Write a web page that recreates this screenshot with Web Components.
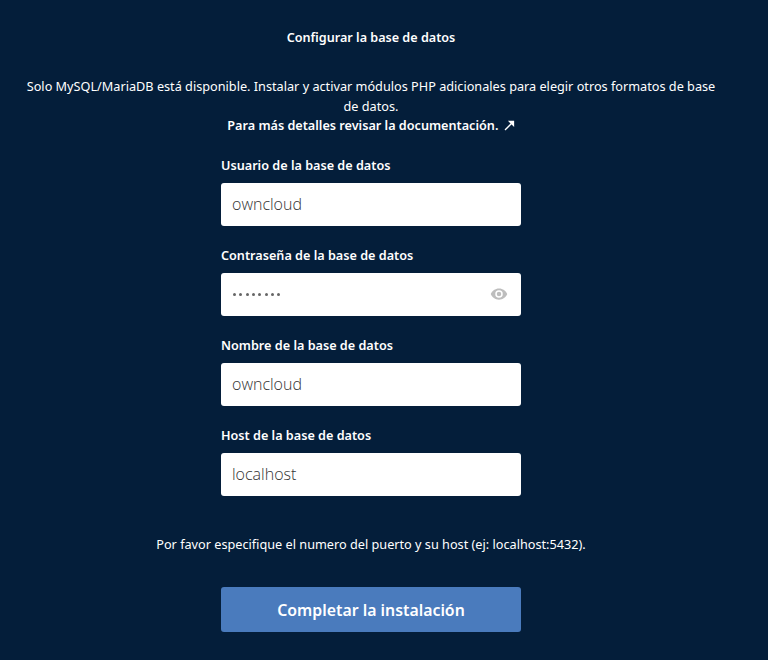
<!DOCTYPE html>
<html lang="es">
<head>
<meta charset="utf-8">
<title>Configurar la base de datos</title>
<style>
html,body{margin:0;padding:0;background:#041e3a;}
body{font-family:"Noto Sans","Open Sans",sans-serif;color:#fff;height:660px;overflow:hidden;}
</style>
</head>
<body>
<db-setup></db-setup>
<script>
class dbField extends HTMLElement{
    constructor(){
        super();
        this.attachShadow({mode:'open'});
        const secret=this.hasAttribute('secret');
        this.shadowRoot.innerHTML=`
        <style>
        :host{display:block;width:300px;height:90px;}
        label{display:block;height:27px;font-size:12.65px;line-height:18px;font-weight:600;color:#fff;}
        .box{display:flex;align-items:center;justify-content:space-between;box-sizing:border-box;height:43px;padding:0 11px;background:#fff;border-radius:3px;}
        .val{font-family:"Open Sans","Noto Sans",sans-serif;font-size:16px;color:#333;font-weight:300;}
        .dots{display:flex;gap:3.35px;margin-left:1px;}
        .dots i{display:block;width:3px;height:3px;border-radius:50%;background:#666;}
        svg{display:block;margin-right:2px;}
        </style>
        <label><slot name="label"></slot></label>
        <div class="box">
        ${secret
            ? `<div class="dots">${'<i></i>'.repeat(8)}</div>
               <svg width="18" height="18" viewBox="0 0 24 24" fill="#bdbdbd"><path d="M12 4.5C7 4.5 2.7 7.6 1 12c1.7 4.4 6 7.5 11 7.5s9.3-3.1 11-7.5c-1.7-4.4-6-7.5-11-7.5zM12 17a5 5 0 1 1 0-10 5 5 0 0 1 0 10zm0-8a3 3 0 1 0 0 6 3 3 0 0 0 0-6z"/></svg>`
            : `<span class="val"><slot></slot></span>`}
        </div>`;
    }
}
customElements.define('db-field',dbField);

class dbSetup extends HTMLElement{
    constructor(){
        super();
        this.attachShadow({mode:'open'});
        this.shadowRoot.innerHTML=`
        <style>
        :host{display:block;width:742px;height:660px;font-family:"Noto Sans","Open Sans",sans-serif;color:#fff;}
        .wrap{display:flex;flex-direction:column;align-items:center;padding-top:29px;}
        h2{margin:0;font-size:12.6px;line-height:18px;font-weight:600;}
        p{margin:0;text-align:center;font-size:12.7px;line-height:19.5px;}
        .info{width:700px;margin-top:30px;}
        .info b{font-weight:600;font-size:12.65px;}
        .arrow{display:inline-block;vertical-align:-1px;margin-left:2px;}
        .fields{margin-top:20px;display:flex;flex-direction:column;}
        .note{margin-top:19px;}
        button{margin-top:33px;width:300px;height:45px;border:0;border-radius:3px;background:#4a7bbd;color:#fff;font:600 15.85px "Noto Sans","Open Sans",sans-serif;padding:0;}
        </style>
        <div class="wrap">
            <h2>Configurar la base de datos</h2>
            <p class="info">Solo MySQL/MariaDB está disponible. Instalar y activar módulos PHP adicionales para elegir otros formatos de base de datos.<br>
            <b>Para más detalles revisar la documentación.</b>
            <svg class="arrow" width="11" height="11" viewBox="0 0 11 11" fill="#fff" stroke="#fff" stroke-width="1.3"><path d="M1 10 8 3"/><path d="M5.5 1.5h4v4z"/></svg></p>
            <div class="fields">
                <db-field><span slot="label">Usuario de la base de datos</span>owncloud</db-field>
                <db-field secret><span slot="label">Contraseña de la base de datos</span></db-field>
                <db-field><span slot="label">Nombre de la base de datos</span>owncloud</db-field>
                <db-field><span slot="label">Host de la base de datos</span>localhost</db-field>
            </div>
            <p class="note">Por favor especifique el numero del puerto y su host (ej: localhost:5432).</p>
            <button>Completar la instalación</button>
        </div>`;
    }
}
customElements.define('db-setup',dbSetup);
</script>
</body>
</html>
